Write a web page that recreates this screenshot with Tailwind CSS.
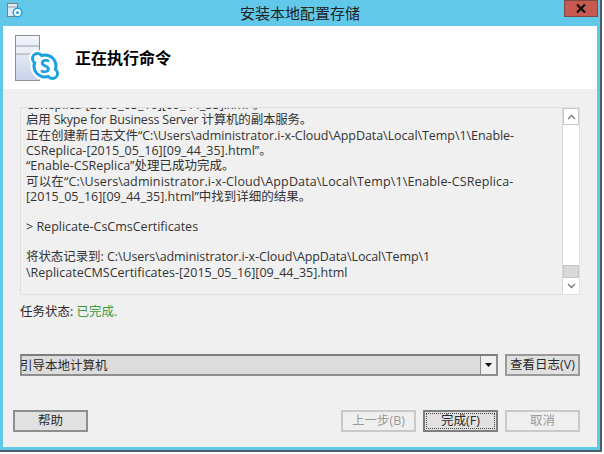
<!DOCTYPE html>
<html lang="zh-CN">
<head>
    <meta charset="UTF-8">
    <title>安装本地配置存储</title>
    <script src="https://cdn.jsdelivr.net/npm/@tailwindcss/browser@4"></script>
</head>
<body class="bg-white w-[604px] h-[454px] overflow-hidden font-['Open_Sans','Noto_Sans_CJK_SC',sans-serif] text-[12.5px] text-[#2b2b2b]">
    <div class="w-[602px] h-[452px] flex flex-col bg-[#62c8ea] border-r-2 border-b-2 border-[#4b5f68] pl-[3px] pr-[3px] pb-[3px]">
        <!-- title bar -->
        <div class="h-[26px] flex items-center relative">
            <svg class="absolute left-[4px] top-[2px]" width="16" height="16" viewBox="0 0 16 16">
                <rect x="0.5" y="1.500" width="10" height="13" fill="#e4e9f4" stroke="#7a8088"/>
                <path d="M1 5 H10" stroke="#9aa0a8"/>
                <circle cx="10.500" cy="10.500" r="5" fill="#1ba1e2"/>
                <circle cx="10.500" cy="10.500" r="3.500" fill="#fff"/>
                <circle cx="10.500" cy="10.500" r="1.500" fill="#1ba1e2"/>
            </svg>
            <div class="flex-1 text-center text-[15px] text-[#222]">安装本地配置存储</div>
            <div class="absolute -right-[1px] top-0 w-[34px] h-[17px] bg-[#c75a50] border border-[#7d4a45] flex items-center justify-center">
                <svg width="10" height="9" viewBox="0 0 10 9"><path d="M1 0.500 L9 8.500 M9 0.500 L1 8.500" stroke="#111" stroke-width="2.200"/></svg>
            </div>
        </div>
        <!-- header -->
        <div class="h-[63px] bg-white flex items-center">
            <svg class="ml-[11px]" width="48" height="48" viewBox="0 0 48 48">
                <defs>
                    <linearGradient id="srv" x1="0" y1="0" x2="0" y2="1">
                        <stop offset="0" stop-color="#f4f6fb"/>
                        <stop offset="1" stop-color="#c9d3ea"/>
                    </linearGradient>
                </defs>
                <rect x="1.500" y="1.500" width="24" height="45" fill="url(#srv)" stroke="#8a8f96"/>
                <rect x="2" y="12" width="23" height="8" fill="#eceff6"/>
                <path d="M2 12 H25 M2 20 H25" stroke="#9aa0a8"/>
                <!-- white halo -->
                <circle cx="31" cy="32" r="14.500" fill="#fff"/>
                <circle cx="23" cy="24" r="8" fill="#fff"/>
                <circle cx="39" cy="40" r="8" fill="#fff"/>
                <!-- logo ring -->
                <circle cx="31" cy="32" r="12.500" fill="#1ba1e2"/>
                <circle cx="23.500" cy="24.500" r="6.500" fill="#1ba1e2"/>
                <circle cx="38.500" cy="39.500" r="6.500" fill="#1ba1e2"/>
                <circle cx="31" cy="32" r="9.500" fill="#fff"/>
                <circle cx="23.500" cy="24.500" r="3.500" fill="#fff"/>
                <circle cx="38.500" cy="39.500" r="3.500" fill="#fff"/>
                <text x="31" y="39" text-anchor="middle" font-size="19" font-weight="700" fill="#1ba1e2" font-family="Open Sans">S</text>
            </svg>
            <h1 class="ml-[13px] text-[16px] font-bold text-black">正在执行命令</h1>
        </div>
        <!-- body -->
        <div class="flex-1 bg-[#f0f0f0] flex flex-col px-[10px] pb-[15px]">
            <div class="mt-[18px] ml-[7px] mr-[7px] h-[188px] border border-[#e0e0e0] flex">
                <div class="flex-1 min-w-0 overflow-hidden flex flex-col justify-end pl-[5px] pb-[14px] leading-[15.3px] text-[#333] whitespace-nowrap">
                    <p>CsReplica-[2015_05_16][09_44_35].xml”。</p>
                    <p class="tracking-[-0.2px]">启用 Skype for Business Server 计算机的副本服务。</p>
                    <p class="tracking-[-0.06px]">正在创建新日志文件“C:\Users\administrator.i-x-Cloud\AppData\Local\Temp\1\Enable-</p>
                    <p>CSReplica-[2015_05_16][09_44_35].html”。</p>
                    <p>“Enable-CSReplica”处理已成功完成。</p>
                    <p class="tracking-[0.13px]">可以在“C:\Users\administrator.i-x-Cloud\AppData\Local\Temp\1\Enable-CSReplica-</p>
                    <p>[2015_05_16][09_44_35].html”中找到详细的结果。</p>
                    <p class="mt-[15px]">&gt; Replicate-CsCmsCertificates</p>
                    <p class="mt-[15px] tracking-[-0.08px]">将状态记录到: C:\Users\administrator.i-x-Cloud\AppData\Local\Temp\1</p>
                    <p>\ReplicateCMSCertificates-[2015_05_16][09_44_35].html</p>
                </div>
                <!-- scrollbar -->
                <div class="w-[17px] shrink-0 bg-white border-l border-[#d8d8d8] flex flex-col">
                    <div class="h-[17px] border border-[#c8c8c8] flex items-center justify-center">
                        <svg width="9" height="6" viewBox="0 0 9 6"><path d="M1 5 L4.500 1.500 L8 5" fill="none" stroke="#777" stroke-width="1.300"/></svg>
                    </div>
                    <div class="flex-1"></div>
                    <div class="h-[13px] bg-[#d9d9d9] border border-[#c6c6c6]"></div>
                    <div class="h-[16px] flex items-center justify-center">
                        <svg width="9" height="6" viewBox="0 0 9 6"><path d="M1 1 L4.500 4.500 L8 1" fill="none" stroke="#777" stroke-width="1.300"/></svg>
                    </div>
                </div>
            </div>
            <div class="mt-[7px] ml-[7px] leading-[20px]">任务状态: <span class="text-[#3f9b3f]">已完成.</span></div>
            <div class="mt-[32px] ml-[7px] flex">
                <div class="w-[478px] h-[22px] bg-[#dcdcdc] border-2 border-[#8e8e8e] border-t-[#7d7d7d] flex">
                    <div class="flex-1 overflow-hidden leading-[19px] -ml-[2px] whitespace-nowrap">引导本地计算机</div>
                    <div class="w-[16px] bg-[#f0f0f0] border-l border-[#8e8e8e] flex items-center justify-center">
                        <svg width="7" height="4" viewBox="0 0 7 4"><path d="M0 0 H7 L3.500 4z" fill="#111"/></svg>
                    </div>
                </div>
                <button class="ml-[7px] w-[75px] h-[22px] bg-[#e1e1e1] border-2 border-[#9a9a9a] text-[12.5px] leading-none whitespace-nowrap">查看日志(V)</button>
            </div>
            <div class="mt-auto flex">
                <button class="w-[75px] h-[22px] bg-[#e1e1e1] border-2 border-[#8e8e8e] text-[12.5px] leading-none">帮助</button>
                <button class="ml-auto w-[75px] h-[22px] bg-[#efefef] border-2 border-[#c9c9c9] text-[#9a9a9a] text-[12.5px] leading-none">上一步(B)</button>
                <button class="ml-[7px] w-[75px] h-[22px] bg-[#e1e1e1] border-2 border-[#7e7e7e] text-[12.5px] leading-none p-[1px]">
                    <span class="flex items-center justify-center w-full h-full border border-dotted border-[#444]">完成(F)</span>
                </button>
                <button class="ml-[7px] mr-[7px] w-[75px] h-[22px] bg-[#efefef] border-2 border-[#c9c9c9] text-[#9a9a9a] text-[12.5px] leading-none">取消</button>
            </div>
        </div>
    </div>
</body>
</html>
